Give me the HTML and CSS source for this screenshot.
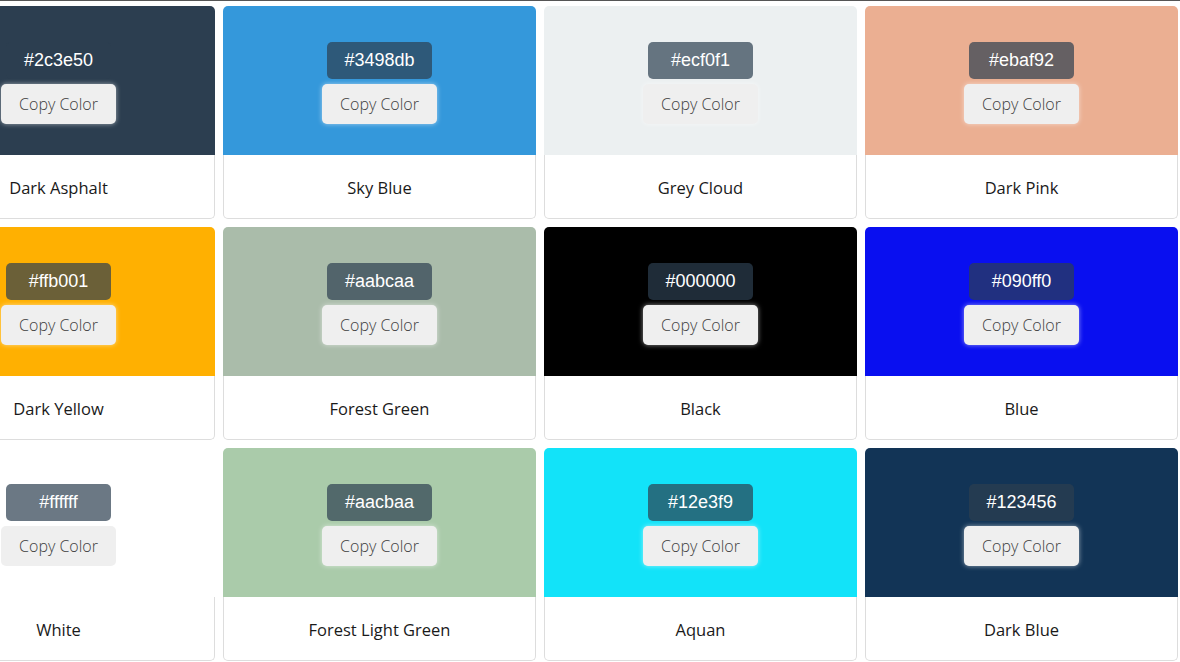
FILE: index.html
```html
<!DOCTYPE html>
<html lang="en">
<head>
<meta charset="utf-8">
<title>Color Palette</title>
<link rel="stylesheet" href="styles.css">
</head>
<body>
<div class="topbar"></div>
<main class="grid">
  <div class="card">
    <div class="swatch" style="background:#2c3e50"><span class="hex">#2c3e50</span><button class="copy">Copy Color</button></div>
    <div class="name">Dark Asphalt</div>
  </div>
  <div class="card">
    <div class="swatch" style="background:#3498db"><span class="hex">#3498db</span><button class="copy">Copy Color</button></div>
    <div class="name">Sky Blue</div>
  </div>
  <div class="card">
    <div class="swatch" style="background:#ecf0f1"><span class="hex">#ecf0f1</span><button class="copy">Copy Color</button></div>
    <div class="name">Grey Cloud</div>
  </div>
  <div class="card">
    <div class="swatch" style="background:#ebaf92"><span class="hex">#ebaf92</span><button class="copy">Copy Color</button></div>
    <div class="name">Dark Pink</div>
  </div>
  <div class="card">
    <div class="swatch" style="background:#ffb001"><span class="hex">#ffb001</span><button class="copy">Copy Color</button></div>
    <div class="name">Dark Yellow</div>
  </div>
  <div class="card">
    <div class="swatch" style="background:#aabcaa"><span class="hex">#aabcaa</span><button class="copy">Copy Color</button></div>
    <div class="name">Forest Green</div>
  </div>
  <div class="card">
    <div class="swatch" style="background:#000000"><span class="hex">#000000</span><button class="copy">Copy Color</button></div>
    <div class="name">Black</div>
  </div>
  <div class="card">
    <div class="swatch" style="background:#090ff0"><span class="hex">#090ff0</span><button class="copy">Copy Color</button></div>
    <div class="name">Blue</div>
  </div>
  <div class="card">
    <div class="swatch" style="background:#ffffff"><span class="hex">#ffffff</span><button class="copy">Copy Color</button></div>
    <div class="name">White</div>
  </div>
  <div class="card">
    <div class="swatch" style="background:#aacbaa"><span class="hex">#aacbaa</span><button class="copy">Copy Color</button></div>
    <div class="name">Forest Light Green</div>
  </div>
  <div class="card">
    <div class="swatch" style="background:#12e3f9"><span class="hex">#12e3f9</span><button class="copy">Copy Color</button></div>
    <div class="name">Aquan</div>
  </div>
  <div class="card">
    <div class="swatch" style="background:#123456"><span class="hex">#123456</span><button class="copy">Copy Color</button></div>
    <div class="name">Dark Blue</div>
  </div>
</main>
</body>
</html>
```
FILE: styles.css
```css
* { box-sizing: border-box; }

html, body {
  margin: 0;
  padding: 0;
  background: #ffffff;
  overflow: hidden;
}

body {
  font-family: "Open Sans", "Liberation Sans", sans-serif;
}

.topbar {
  height: 1px;
  background: #555555;
}

.grid {
  display: grid;
  grid-template-columns: repeat(4, 313px);
  grid-auto-rows: 213px;
  gap: 8px;
  margin-left: -98px;
  padding-top: 5px;
}

.card {
  display: flex;
  flex-direction: column;
}

.swatch {
  height: 149px;
  border-radius: 5px 5px 0 0;
  display: flex;
  flex-direction: column;
  align-items: center;
  padding-top: 36px;
}

.hex {
  width: 105px;
  height: 37px;
  line-height: 37px;
  text-align: center;
  background: rgba(44, 62, 80, 0.7);
  color: #ffffff;
  font-family: "Liberation Sans", Arial, sans-serif;
  font-size: 18px;
  border-radius: 5px;
}

.copy {
  margin-top: 5px;
  width: 115px;
  height: 40px;
  border: none;
  border-radius: 5px;
  background: #efefef;
  color: #404040;
  font-family: "Open Sans", sans-serif;
  font-size: 16px;
  font-weight: 300;
  box-shadow: 0 0 5px rgba(255, 255, 255, 0.55);
  padding: 0 0 1px;
  cursor: pointer;
}

.name {
  flex: 1;
  border: 1px solid #dddddd;
  border-top: none;
  border-radius: 0 0 5px 5px;
  display: flex;
  align-items: center;
  justify-content: center;
  font-size: 16.5px;
  color: #1a1a1a;
  padding-top: 1px;
}
```
